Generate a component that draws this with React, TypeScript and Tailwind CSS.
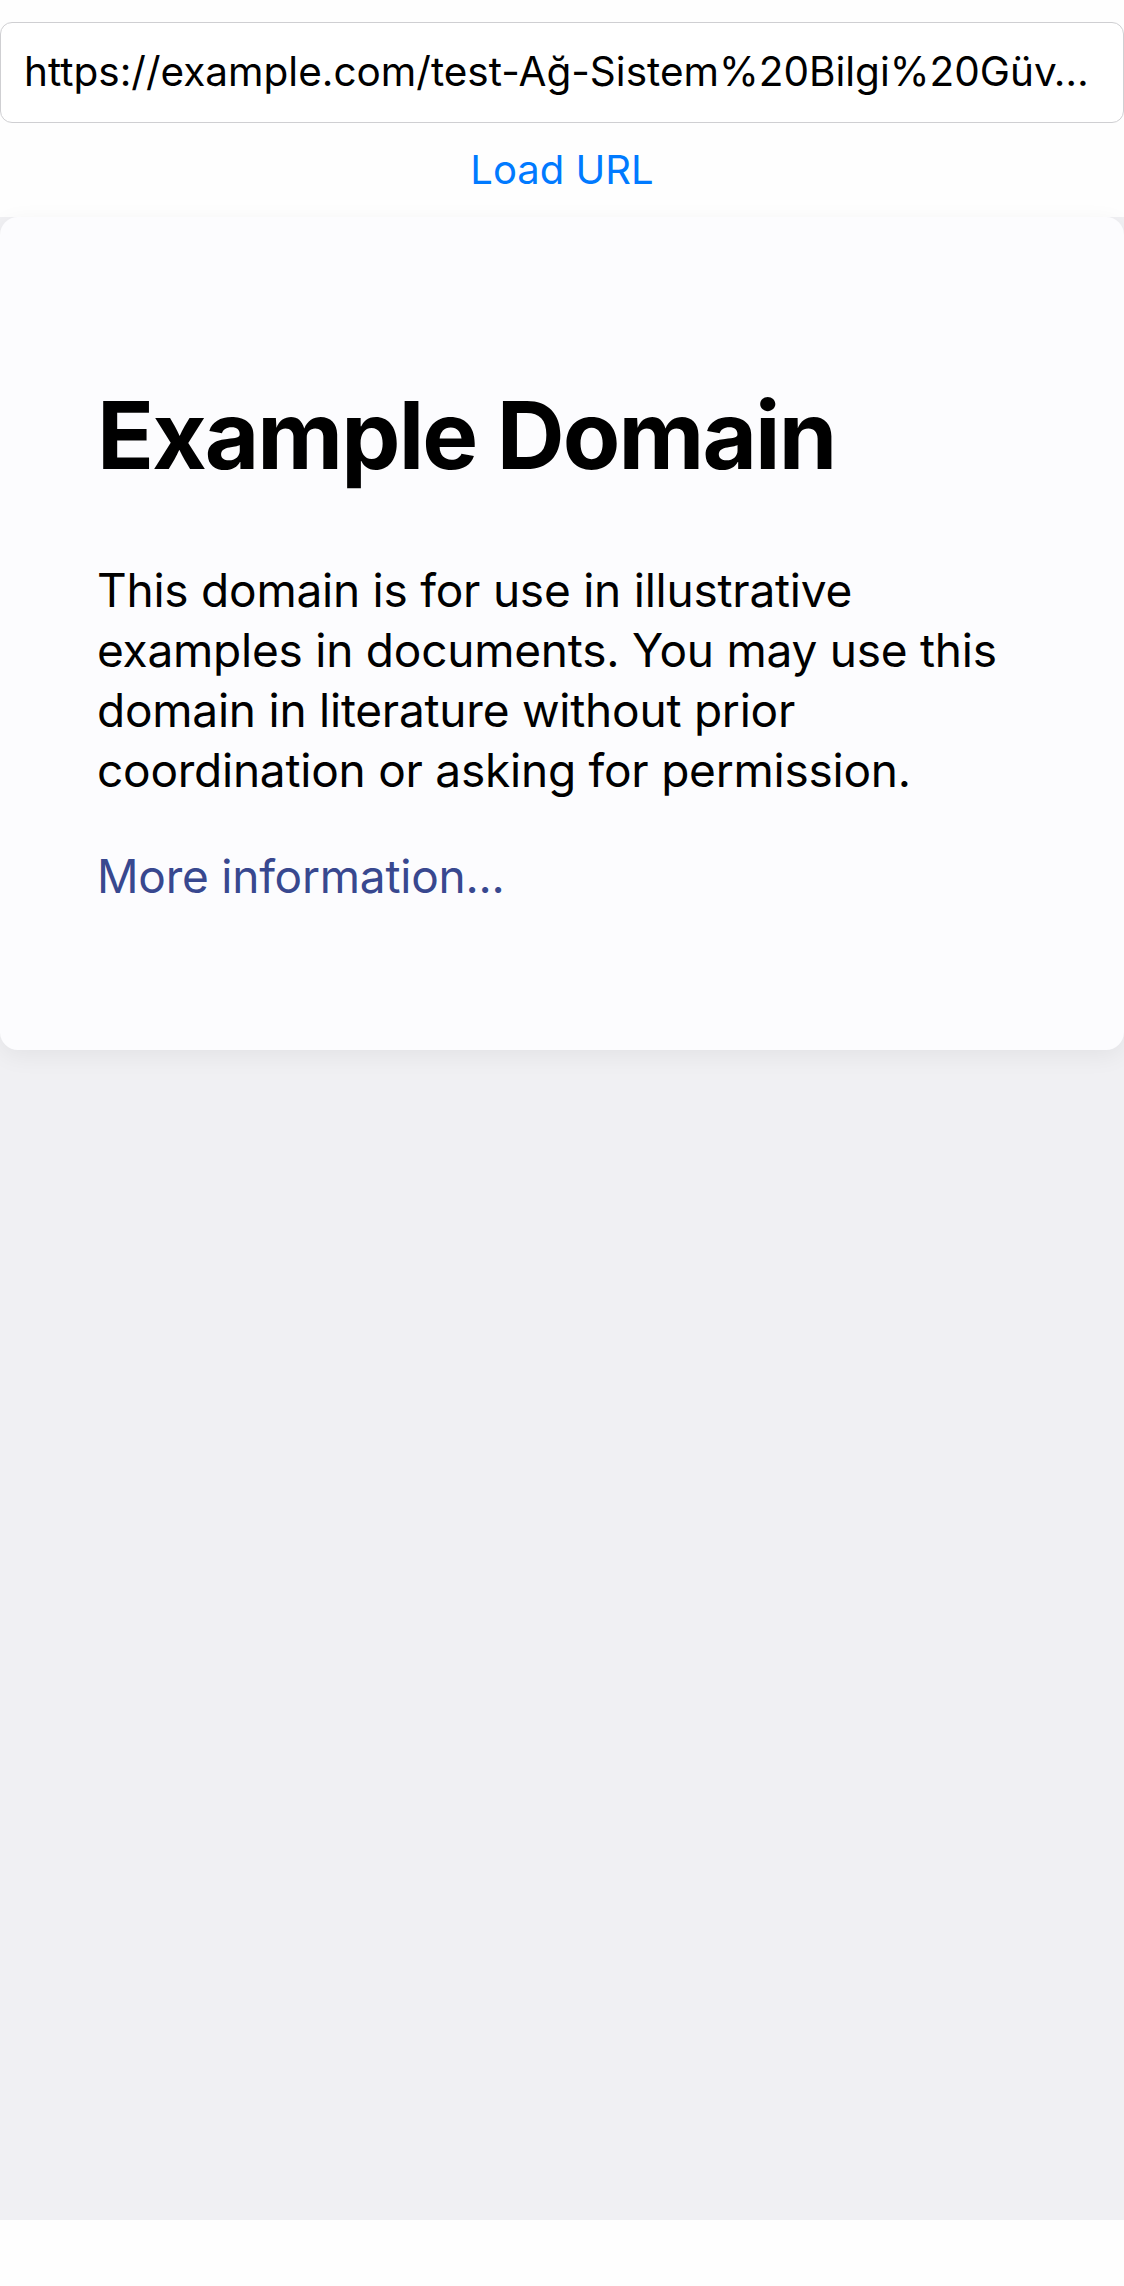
import React from 'react';

function UrlBar() {
  return (
    <div className="pt-[22px]">
      <div className="h-[101px] w-full rounded-[12px] border border-[#cfcfd2] bg-white flex items-center px-[23px]">
        <p className="whitespace-nowrap text-[40.5px] text-black">
          https://example.com/test-Ağ-Sistem%20Bilgi%20Güv…
        </p>
      </div>
      <div className="h-[94px] flex items-center justify-center">
        <button className="text-[40px] text-[#007aff] leading-[48px]">Load URL</button>
      </div>
    </div>
  );
}

function ExampleCard() {
  return (
    <div className="bg-[#fcfcfe] rounded-[18px] shadow-[0_6px_24px_rgba(0,0,0,0.06)] pt-[162px] pb-[144px] px-[97px] h-[833px]">
      <h1 className="text-[94px] font-bold leading-[113px] tracking-[-0.02em] text-black">
        Example Domain
      </h1>
      <p className="mt-[68px] text-[46px] leading-[60px] text-black tracking-[-0.005em]">
        This domain is for use in illustrative examples in documents. You may use this
        domain in literature without prior coordination or asking for permission.
      </p>
      <p className="mt-[46px] text-[46px] leading-[60px] tracking-[-0.005em]">
        <a className="text-[#38488f]">More information...</a>
      </p>
    </div>
  );
}

export default function App() {
  return (
    <div
      className="w-[1124px] h-[2286px] bg-[#fefefe] flex flex-col"
      style={{ fontFamily: 'Inter, "Noto Sans", sans-serif' }}
    >
      <UrlBar />
      <div className="flex-1 flex flex-col bg-[#f0f0f3]">
        <ExampleCard />
        <div className="flex-1" />
      </div>
      <div className="h-[66px] bg-[#fefefe]" />
    </div>
  );
}
